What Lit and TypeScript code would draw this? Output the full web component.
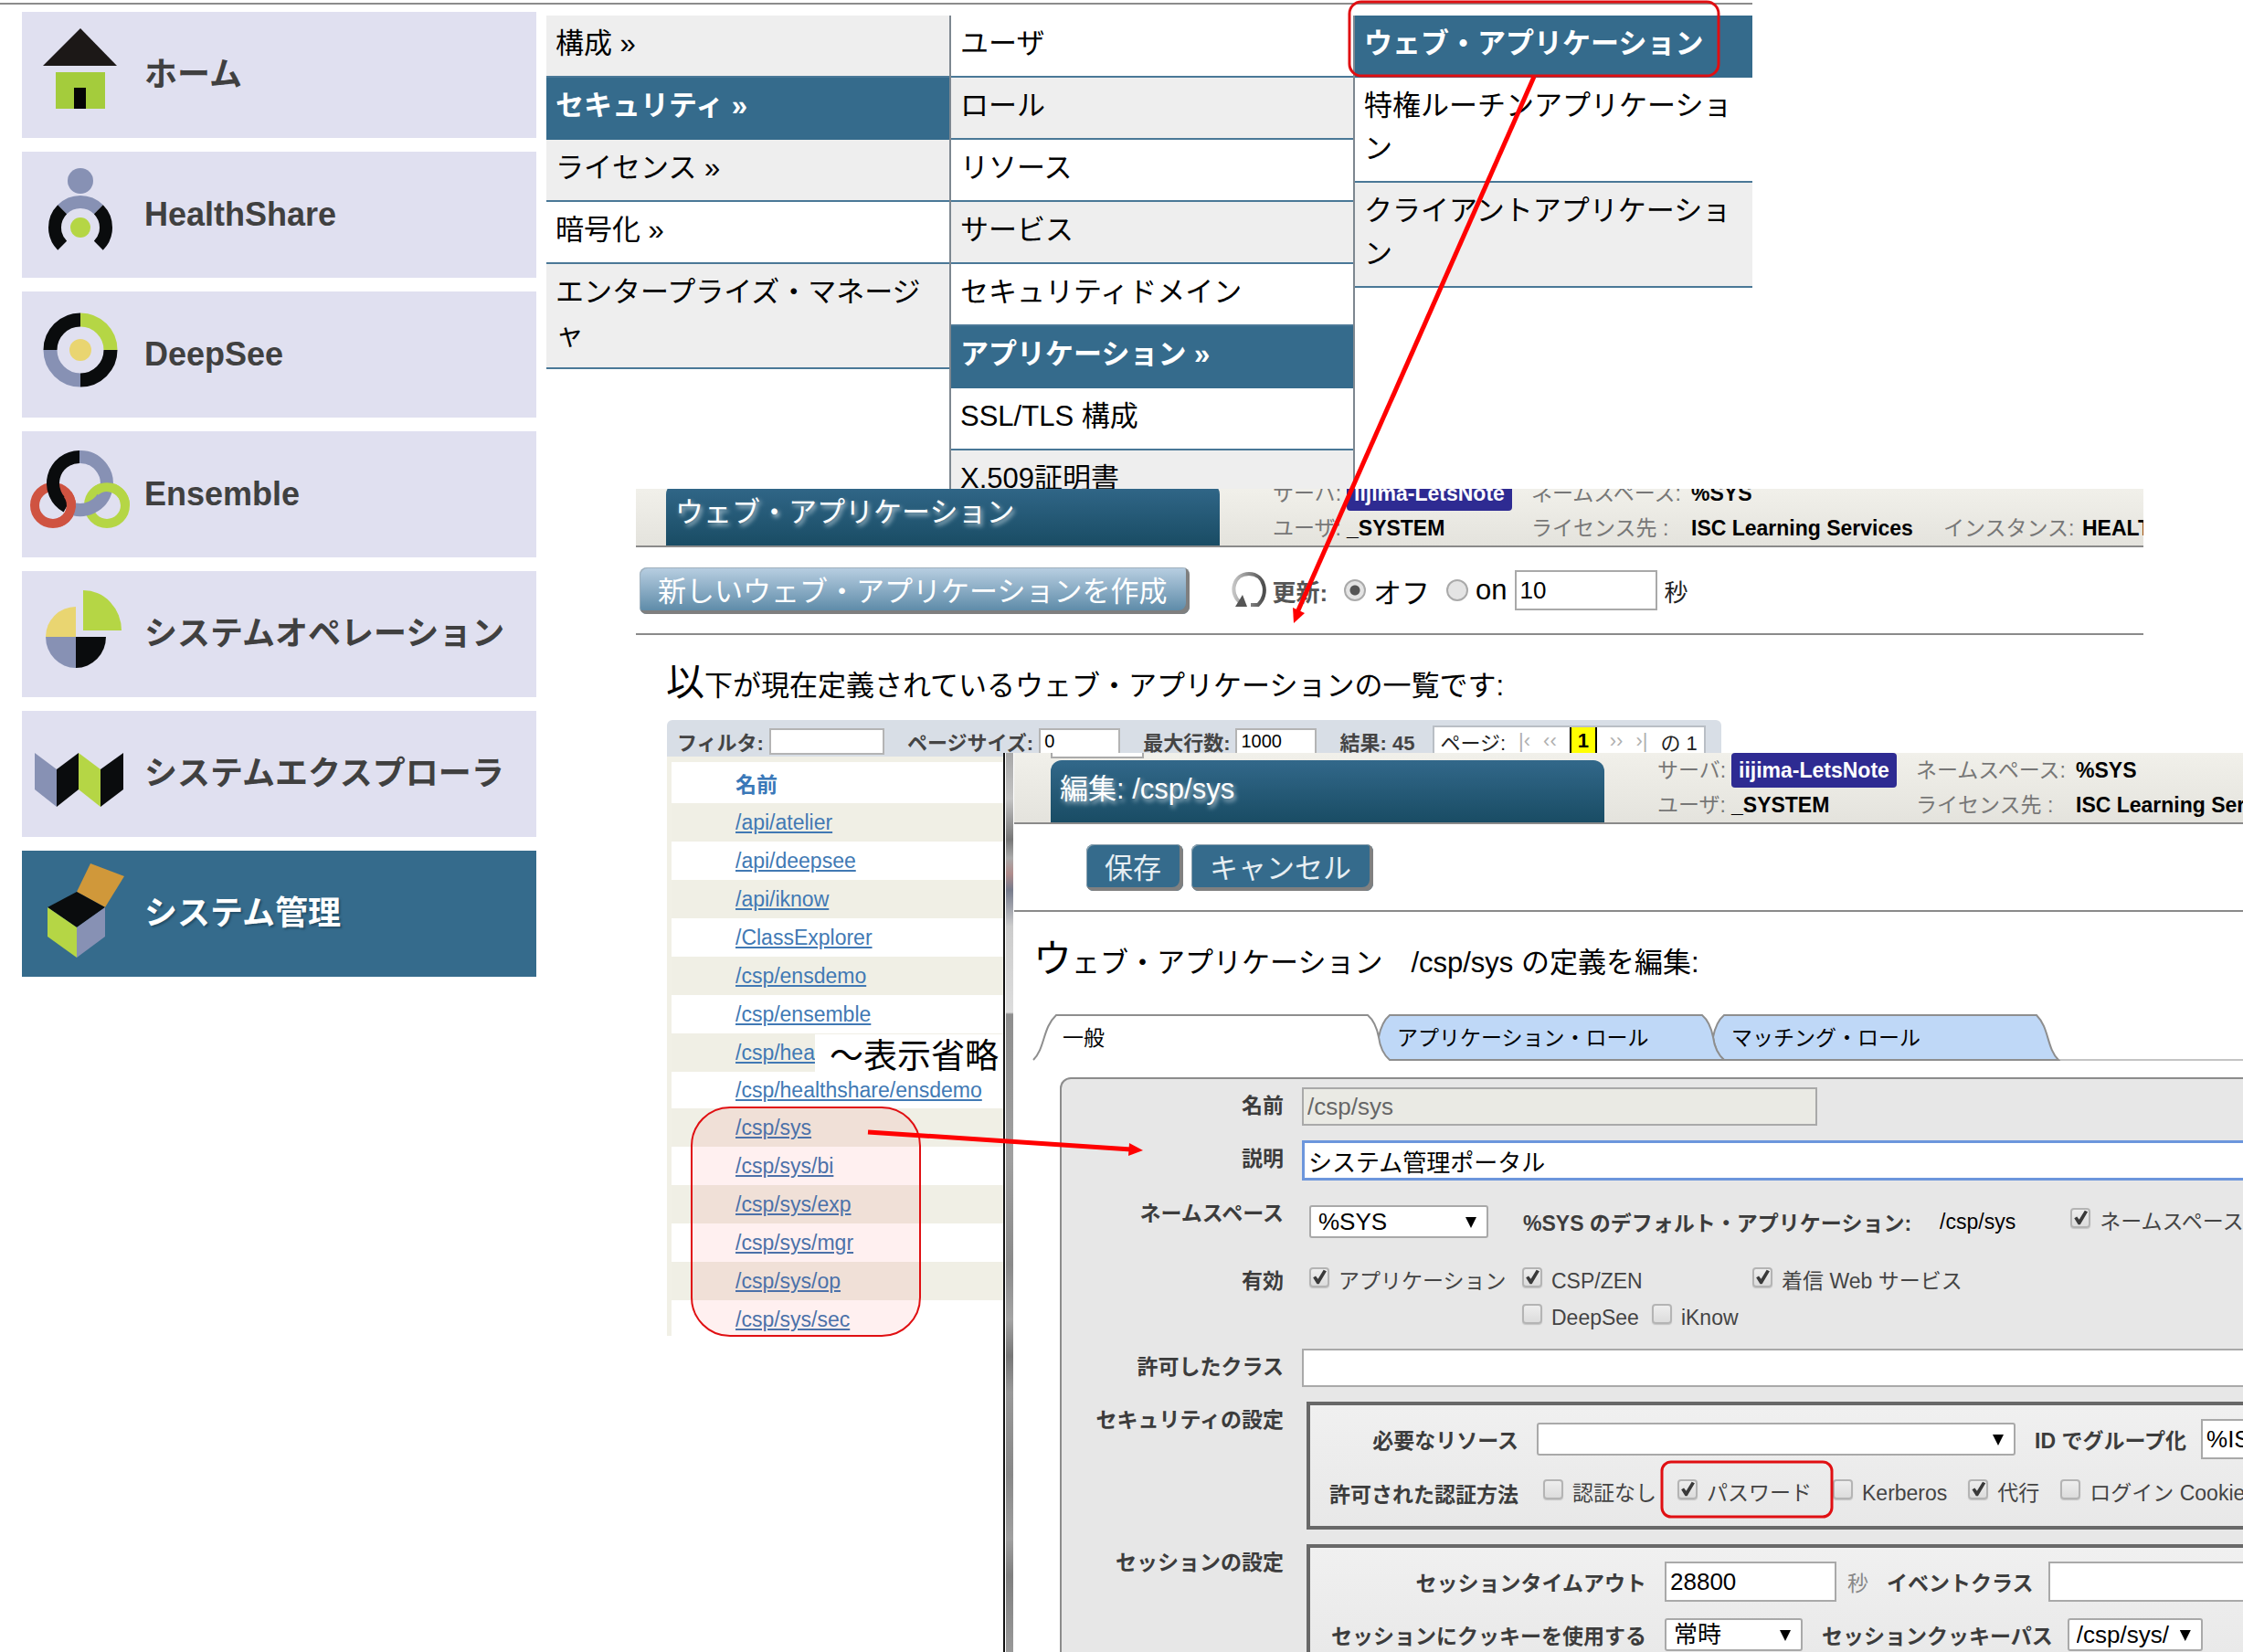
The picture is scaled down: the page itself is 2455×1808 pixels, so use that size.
import { LitElement, html, svg, css, nothing } from "lit";
import type { TemplateResult, SVGTemplateResult } from "lit";
import { customElement, property } from "lit/decorators.js";
import { classMap } from "lit/directives/class-map.js";

const base = css`
  :host {
    display: block;
    box-sizing: border-box;
    font-family: "Liberation Sans", "Noto Sans CJK JP", sans-serif;
    color: #000;
    white-space: nowrap;
  }
  *,
  *::before,
  *::after {
    box-sizing: border-box;
  }
  button,
  input,
  select {
    font-family: inherit;
    margin: 0;
  }
  h1,
  h2,
  p,
  ul {
    margin: 0;
    padding: 0;
    font-weight: normal;
  }
`;

const controls = css`
  .field {
    height: 42px;
    border: 2px solid #a9a9a9;
    border-radius: 0;
    background: #fff;
    padding: 0 4px;
    font-size: 26px;
    color: #000;
    outline: none;
  }
  .pick {
    position: relative;
    display: inline-flex;
  }
  .pick select {
    appearance: none;
    width: 100%;
    height: 36px;
    border: 2px solid #a9a9a9;
    border-radius: 3px;
    background: #fff;
    padding: 0 8px;
    font-size: 26px;
    color: #000;
  }
  .pick::after {
    content: "";
    position: absolute;
    right: 13px;
    top: 13px;
    width: 12px;
    height: 12px;
    background: #000;
    clip-path: polygon(0 0, 100% 0, 50% 100%);
    pointer-events: none;
  }
  .tick {
    appearance: none;
    flex: none;
    width: 22px;
    height: 22px;
    border: 2px solid #b4b4b4;
    border-radius: 4px;
    background: linear-gradient(#eee, #dcdcdc);
    box-shadow: 0 1px 1px #c4c4c4;
  }
  .tick:checked::before {
    content: "";
    display: block;
    width: 18px;
    height: 18px;
    background: #3a3a3a;
    clip-path: polygon(12% 52%, 28% 42%, 42% 60%, 76% 4%, 94% 12%, 48% 90%, 36% 90%);
  }
`;

/* ---------- portal: side navigation and cascading menu ---------- */

const BLACK = "#0a0c0d";
const SLATE = "#8791b4";
const LIME = "#b5d645";
const SAND = "#e9d571";

const icons: Record<string, SVGTemplateResult> = {
  home: svg`
    <path d="M64 18 104 59H23Z" fill="#1c1817"/>
    <path d="M37 66H91V106H37Z" fill="#a4cc3c"/>
    <path d="M57 83H70V106H57Z" fill="#050505"/>`,
  health: svg`
    <circle cx="64" cy="32" r="14" fill=${SLATE}/>
    <g fill="none" stroke-width="14">
      <path d="M44.200 63.200A28 28 0 0 1 83.800 63.200" stroke=${SLATE}/>
      <path d="M44.200 63.200A28 28 0 0 0 44.200 102.800" stroke=${BLACK}/>
      <path d="M83.800 63.200A28 28 0 0 1 83.800 102.800" stroke=${BLACK}/>
    </g>
    <circle cx="64" cy="83" r="11" fill=${LIME}/>`,
  deepsee: svg`
    <g fill="none" stroke-width="15">
      <path d="M31 64A33 33 0 0 1 64 31" stroke=${BLACK}/>
      <path d="M64 31A33 33 0 0 1 97 64" stroke=${LIME}/>
      <path d="M97 64A33 33 0 0 1 64 97" stroke=${BLACK}/>
      <path d="M64 97A33 33 0 0 1 31 64" stroke=${SLATE}/>
    </g>
    <circle cx="64" cy="64" r="12" fill=${SAND}/>`,
  ensemble: svg`
    <g fill="none">
      <circle cx="34" cy="81" r="20" stroke="#cf5341" stroke-width="10"/>
      <circle cx="93" cy="81" r="20" stroke=${LIME} stroke-width="10"/>
      <path d="M63 28A29 29 0 1 1 51 83" stroke=${SLATE} stroke-width="14"/>
      <path d="M63 28A29 29 0 0 0 49 82.400" stroke=${BLACK} stroke-width="14"/>
      <path d="M50 69A20 20 0 0 1 40 100" stroke="#cf5341" stroke-width="10"/>
      <path d="M80 66A20 20 0 0 1 113 81" stroke=${LIME} stroke-width="10"/>
    </g>`,
  operation: svg`
    <path d="M59 72V39A33 33 0 0 0 26 72Z" fill=${SAND}/>
    <path d="M59 72H26A33 34 0 0 0 59 106Z" fill=${SLATE}/>
    <path d="M59 72V106A33 34 0 0 0 92 72Z" fill=${BLACK}/>
    <path d="M67 65V21A42 44 0 0 1 109 65Z" fill=${LIME}/>`,
  explorer: svg`
    <path d="M14 46 38 64V105L14 86Z" fill=${SLATE}/>
    <path d="M38 64 62 46V86L38 105Z" fill=${BLACK}/>
    <path d="M62 46 86 64V105L62 86Z" fill=${LIME}/>
    <path d="M86 64 111 46V86L86 105Z" fill=${BLACK}/>`,
  admin: svg`
    <path d="M75 14 112 28 91 62 60 45Z" fill="#d0983a"/>
    <path d="M60 45 91 62 60 84 28 62Z" fill=${BLACK}/>
    <path d="M28 62 60 84V117L28 94Z" fill=${LIME}/>
    <path d="M60 84 91 62V94L60 117Z" fill=${SLATE}/>`,
};

interface NavItem {
  icon: string;
  text: string;
  active?: boolean;
}

const NAV: NavItem[] = [
  { icon: "home", text: "ホーム" },
  { icon: "health", text: "HealthShare" },
  { icon: "deepsee", text: "DeepSee" },
  { icon: "ensemble", text: "Ensemble" },
  { icon: "operation", text: "システムオペレーション" },
  { icon: "explorer", text: "システムエクスプローラ" },
  { icon: "admin", text: "システム管理", active: true },
];

interface MenuItem {
  text: string;
  tone: "grey" | "white" | "active";
}

const MENU: MenuItem[][] = [
  [
    { text: "構成 »", tone: "grey" },
    { text: "セキュリティ »", tone: "active" },
    { text: "ライセンス »", tone: "grey" },
    { text: "暗号化 »", tone: "white" },
    { text: "エンタープライズ・マネージャ", tone: "grey" },
  ],
  [
    { text: "ユーザ", tone: "white" },
    { text: "ロール", tone: "grey" },
    { text: "リソース", tone: "white" },
    { text: "サービス", tone: "grey" },
    { text: "セキュリティドメイン", tone: "white" },
    { text: "アプリケーション »", tone: "active" },
    { text: "SSL/TLS 構成", tone: "white" },
    { text: "X.509証明書", tone: "grey" },
  ],
  [
    { text: "ウェブ・アプリケーション", tone: "active" },
    { text: "特権ルーチンアプリケーション", tone: "white" },
    { text: "クライアントアプリケーション", tone: "grey" },
  ],
];

@customElement("portal-menu")
class PortalMenu extends LitElement {
  static styles = [
    base,
    css`
      :host {
        width: 1918px;
        padding-top: 3px;
      }
      .rule {
        height: 2px;
        background: #8c8c8c;
      }
      .body {
        display: flex;
        align-items: flex-start;
        gap: 11px;
        padding: 8px 0 0 24px;
      }
      .side {
        display: flex;
        flex-direction: column;
        gap: 15px;
        width: 563px;
      }
      .nav {
        display: flex;
        align-items: center;
        gap: 14px;
        height: 138px;
        border: 0;
        padding: 0;
        background: #e0e0f0;
        color: #404040;
        font-size: 36px;
        line-height: 40px;
        font-weight: bold;
        text-decoration: none;
      }
      .nav.active {
        background: #356b8c;
        color: #fff;
        text-shadow: 2px 2px 2px #24506b;
      }
      .nav svg {
        width: 120px;
        height: 138px;
        flex: none;
      }
      .menus {
        display: grid;
        grid-template-columns: 441fr 442fr 437fr;
        flex: 1;
        padding-top: 4px;
      }
      .col {
        list-style: none;
        border-left: 2px solid #7d8790;
      }
      .col:first-child {
        border-left: 0;
      }
      .item {
        display: block;
        border-bottom: 2px solid #4a7897;
        padding: 7px 8px 12px 10px;
        font-size: 31px;
        line-height: 47px;
        color: #000;
        text-decoration: none;
        white-space: normal;
        word-break: break-all;
        line-break: anywhere;
      }
      .item.grey {
        background: #eee;
      }
      .item.active {
        background: #356b8c;
        border-color: #356b8c;
        color: #fff;
        font-weight: bold;
      }
    `,
  ];

  render() {
    return html`
      <div class="rule"></div>
      <div class="body">
        <nav class="side">
          ${NAV.map(
            (n) => html`<a href="#" class=${classMap({ nav: true, active: !!n.active })}>
              <svg viewBox="0 0 120 138" aria-hidden="true">${icons[n.icon]}</svg>
              <span>${n.text}</span>
            </a>`
          )}
        </nav>
        <div class="menus">
          ${MENU.map(
            (col) => html`<ul class="col">
              ${col.map((m) => html`<li><a href="#" class="item ${m.tone}">${m.text}</a></li>`)}
            </ul>`
          )}
        </div>
      </div>
    `;
  }
}

/* ---------- title bar shared by the two windows ---------- */

@customElement("title-bar")
class TitleBar extends LitElement {
  @property() heading = "";

  static styles = [
    base,
    css`
      .bar {
        display: flex;
        align-items: flex-end;
        gap: 58px;
        height: 76px;
      }
      .title {
        flex: none;
        width: 606px;
        height: 68px;
        padding-left: 10px;
        border-radius: 12px 12px 0 0;
        background: linear-gradient(#32688a, #194c64);
        color: #fff;
        font-size: 31px;
        line-height: 64px;
        text-shadow: 2px 3px 5px #b9cdd8;
      }
      .info {
        display: grid;
        grid-template-columns: 81px 202px 175px 276px 152px 200px;
        grid-auto-rows: 38px;
        font-size: 23px;
        line-height: 38px;
        color: #777;
      }
      .value {
        color: #000;
        font-weight: bold;
      }
      .chip {
        justify-self: start;
        padding: 0 8px;
        border-radius: 4px;
        background: #2e2b92;
        color: #fff;
        font-weight: bold;
      }
    `,
  ];

  render() {
    return html`<div class="bar">
      <h1 class="title">${this.heading}</h1>
      <div class="info">
        <span>サーバ:</span><span class="chip">iijima-LetsNote</span>
        <span>ネームスペース:</span><span class="value">%SYS</span>
        <span></span><span></span>
        <span>ユーザ:</span><span class="value">_SYSTEM</span>
        <span>ライセンス先 :</span><span class="value">ISC Learning Services</span>
        <span>インスタンス:</span><span class="value">HEALTH</span>
      </div>
    </div>`;
  }
}

/* ---------- list of web applications ---------- */

const APPS = [
  "/api/atelier",
  "/api/deepsee",
  "/api/iknow",
  "/ClassExplorer",
  "/csp/ensdemo",
  "/csp/ensemble",
  "/csp/hea",
  "/csp/healthshare/ensdemo",
  "/csp/sys",
  "/csp/sys/bi",
  "/csp/sys/exp",
  "/csp/sys/mgr",
  "/csp/sys/op",
  "/csp/sys/sec",
];

@customElement("app-list")
class AppList extends LitElement {
  static styles = [
    base,
    controls,
    css`
      :host {
        background: #fff;
        overflow: hidden;
      }
      .top {
        display: flex;
        align-items: flex-end;
        height: 64px;
        padding-left: 33px;
        background: linear-gradient(#f1f0ea, #e4e3dd);
        border-bottom: 2px solid #8a8a8a;
      }
      .actions {
        display: flex;
        align-items: center;
        height: 96px;
        padding: 0 0 0 4px;
        border-bottom: 2px solid #8a8a8a;
      }
      .create {
        height: 51px;
        margin-right: 44px;
        padding: 0 25px 4px 20px;
        border: 0;
        border-radius: 8px;
        background: linear-gradient(#b9cfe2, #5786a4);
        box-shadow: inset -4px -4px 0 #7f7f7f, inset 1px 1px 0 #9fb0bd;
        color: #fff;
        font-size: 31px;
      }
      .reload {
        width: 40px;
        height: 42px;
        margin-right: 6px;
      }
      .caption {
        margin-right: 18px;
        font-size: 26px;
        font-weight: bold;
        color: #555;
      }
      .radio {
        appearance: none;
        width: 24px;
        height: 24px;
        margin-right: 8px;
        border: 2px solid #aaa;
        border-radius: 50%;
        background: #e4e4e4;
      }
      .radio:checked {
        background: radial-gradient(circle, #555 0 5px, #e4e4e4 6px);
      }
      .choice {
        display: flex;
        align-items: center;
        margin-right: 18px;
        font-size: 31px;
      }
      .choice.last {
        margin-right: 8px;
      }
      .seconds {
        width: 156px;
        height: 44px;
        margin-right: 8px;
      }
      .unit {
        font-size: 26px;
        color: #222;
      }
      .lead {
        padding: 22px 0 0 33px;
        height: 93px;
        font-size: 31px;
        line-height: 60px;
      }
      .lead::first-letter {
        font-size: 42px;
      }
      .filter {
        display: flex;
        align-items: center;
        width: 1154px;
        height: 40px;
        margin-left: 34px;
        padding: 6px 0 0 11px;
        border-radius: 6px 6px 0 0;
        background: #d8dee6;
        font-size: 22px;
        font-weight: bold;
        color: #444;
      }
      .group {
        display: flex;
        align-items: center;
        gap: 6px;
        margin-right: 25px;
      }
      .small {
        width: 89px;
        height: 29px;
        border: 2px solid #b4b4b4;
        padding: 0 4px;
        font-size: 20px;
        outline: none;
      }
      .small.search {
        width: 126px;
      }
      .count {
        margin-right: 20px;
      }
      .pager {
        display: flex;
        align-items: center;
        gap: 14px;
        height: 34px;
        width: 299px;
        padding-left: 6px;
        border: 2px solid #b9bec5;
        background: #fff;
        font-weight: normal;
        color: #222;
      }
      .step {
        border: 0;
        padding: 0;
        background: none;
        color: #b0b0b0;
        font-size: 22px;
      }
      .page {
        width: 30px;
        height: 30px;
        border: 2px solid #000;
        border-width: 0 2px;
        background: #ff0;
        color: #000;
        font-weight: bold;
        text-align: center;
        line-height: 30px;
      }
      .table {
        width: 500px;
        margin-left: 34px;
        border-spacing: 0;
        border: 5px solid #f1f0e6;
        border-width: 6px 0 0 5px;
        font-size: 23px;
        text-align: left;
      }
      .table th {
        height: 45px;
        padding: 0 0 0 70px;
        color: #3a78b8;
      }
      .table td {
        height: 42px;
        padding: 0 0 0 70px;
      }
      .table .cut td {
        height: 40px;
      }
      .table tbody tr:nth-child(odd) {
        background: #f0efe5;
      }
      .table a {
        color: #4179b4;
      }
    `,
  ];

  render() {
    return html`
      <div class="top"><title-bar heading="ウェブ・アプリケーション"></title-bar></div>
      <div class="actions">
        <button class="create" type="button">新しいウェブ・アプリケーションを作成</button>
        <svg class="reload" viewBox="0 0 40 42" aria-hidden="true">
          <defs>
            <linearGradient id="steel" x1="0" x2="1"><stop offset="0" stop-color="#c4c4c4"/><stop offset="1" stop-color="#4c4c4c"/></linearGradient>
          </defs>
          <path d="M11 34C-1 24 4 3 21 3C39 3 43 26 31 37H23" fill="none" stroke="url(#steel)" stroke-width="4"/>
          <path d="M6 39 14 26 19 39Z" fill="#555"/>
        </svg>
        <span class="caption">更新:</span>
        <label class="choice"><input class="radio" type="radio" name="refresh" checked />オフ</label>
        <label class="choice last"><input class="radio" type="radio" name="refresh" />on</label>
        <input class="field seconds" aria-label="更新" .value=${"10"} />
        <span class="unit">秒</span>
      </div>
      <h2 class="lead">以下が現在定義されているウェブ・アプリケーションの一覧です:</h2>
      <div class="filter">
        <label class="group">フィルタ:<input class="small search" /></label>
        <label class="group">ページサイズ:<input class="small" .value=${"0"} /></label>
        <label class="group">最大行数:<input class="small" .value=${"1000"} /></label>
        <span class="count">結果: 45</span>
        <div class="pager">
          <span>ページ:</span>
          <button class="step" type="button">|‹</button>
          <button class="step" type="button">‹‹</button>
          <span class="page">1</span>
          <button class="step" type="button">››</button>
          <button class="step" type="button">›|</button>
          <span>の 1</span>
        </div>
      </div>
      <table class="table">
        <thead>
          <tr><th>名前</th></tr>
        </thead>
        <tbody>
          ${APPS.map(
            (a, i) => html`<tr class=${i === 7 ? "cut" : nothing}><td><a href="#">${a}</a></td></tr>`
          )}
        </tbody>
      </table>
    `;
  }
}

/* ---------- edit form of one web application ---------- */

const tick = (text: string, checked = false): TemplateResult => html`<label class="check"
  ><input class="tick" type="checkbox" .checked=${checked} />${text}</label
>`;

@customElement("app-editor")
class AppEditor extends LitElement {
  static styles = [
    base,
    controls,
    css`
      :host {
        display: flex;
        overflow: hidden;
        background: #fff;
      }
      .frame {
        flex: none;
        width: 12px;
        border-left: 2px solid #111;
        background: linear-gradient(
          #a8a8a8 0,
          #c4c4c4 50px,
          #777 95px,
          #aaa 115px,
          #b08c8c 132px,
          #777c8c 150px,
          #ccc 190px,
          #ddd 284px,
          #8e8e8e 286px,
          #a0a0a0 440px,
          #8a8a8a 560px,
          #a4a4a4 620px,
          #777 660px,
          #999 700px,
          #888 790px,
          #a0a0a0 860px,
          #808080 900px,
          #999 100%
        );
        box-shadow: inset 1px 0 0 #fff, inset -1px 0 0 #fff;
      }
      .page {
        flex: 1;
        min-width: 0;
      }
      .top {
        position: relative;
        height: 78px;
        padding-left: 40px;
        background: linear-gradient(#f1f0ea, #e4e3dd);
        border-bottom: 2px solid #8a8a8a;
      }
      .stub {
        position: absolute;
        left: 40px;
        top: 0;
        width: 102px;
        height: 6px;
        border: 2px solid #aaa;
        border-top: 0;
        background: #fff;
      }
      .actions {
        display: flex;
        align-items: center;
        gap: 9px;
        height: 96px;
        padding-left: 79px;
        border-bottom: 2px solid #8a8a8a;
      }
      .push {
        height: 51px;
        padding: 0 24px 4px 20px;
        border: 0;
        border-radius: 8px;
        background: #356b8c;
        box-shadow: inset -4px -4px 0 #808080, inset 1px 1px 0 #8aa0ae;
        color: #e6eef2;
        font-size: 31px;
      }
      .lead {
        height: 111px;
        padding: 22px 0 0 21px;
        font-size: 31px;
        line-height: 60px;
      }
      .lead::first-letter {
        font-size: 42px;
      }
      .tabs {
        position: relative;
        display: flex;
        height: 52px;
        padding-left: 33px;
      }
      .shape {
        position: absolute;
        left: 0;
        top: 0;
        width: 100%;
        height: 52px;
      }
      .tab {
        position: relative;
        width: 366px;
        padding: 0 0 2px 20px;
        border: 0;
        background: none;
        color: #000;
        font-size: 23px;
        text-align: left;
      }
      .panel {
        display: grid;
        grid-template-columns: 243px 1fr;
        column-gap: 20px;
        row-gap: 16px;
        margin: 18px -40px 0 50px;
        padding-top: 9px;
        border: 2px solid #8c8c8c;
        border-bottom: 0;
        border-radius: 12px 0 0 0;
        background: #e7e7e7;
        color: #444;
        font-size: 23px;
      }
      .name {
        text-align: right;
        font-weight: bold;
        line-height: 40px;
        color: #3c3c3c;
      }
      .strong {
        font-weight: bold;
        color: #3c3c3c;
      }
      .full {
        width: 100%;
      }
      .readonly {
        width: 564px;
        background: #eaeae4;
        color: #666;
      }
      .focused {
        height: 44px;
        border: 3px solid #6c96dc;
      }
      .line {
        display: flex;
        align-items: center;
        padding-left: 8px;
      }
      .line.space {
        height: 58px;
      }
      .w-space {
        width: 196px;
        margin-right: 38px;
      }
      .path {
        margin: 0 60px 0 31px;
        color: #000;
      }
      .check {
        display: flex;
        align-items: center;
        gap: 10px;
        line-height: 40px;
      }
      .check .tick {
        margin-bottom: 8px;
      }
      .enabled {
        display: grid;
        grid-template-columns: 233px 252px auto;
        height: 78px;
        padding-left: 8px;
      }
      .pair {
        grid-column: 2 / 4;
        display: flex;
        gap: 14px;
      }
      .group {
        display: grid;
        align-content: start;
        row-gap: 8px;
        height: 140px;
        margin: 0 0 0 5px;
        padding: 14px 0 0;
        border: 4px solid #686868;
        background: linear-gradient(#f0f0f0, #e8e8e8);
      }
      .row {
        display: flex;
        align-items: center;
        height: 46px;
      }
      .row.loose {
        height: 56px;
      }
      .row .key {
        flex: none;
        width: 228px;
        margin-right: 20px;
        text-align: right;
        font-weight: bold;
        color: #3c3c3c;
      }
      .session .key {
        width: 368px;
      }
      .session {
        row-gap: 12px;
      }
      .w-resource {
        width: 524px;
        margin-right: 21px;
      }
      .w-group {
        width: 200px;
        height: 44px;
        margin-left: 16px;
      }
      .methods {
        display: flex;
        gap: 23px;
        padding-left: 7px;
      }
      .w-timeout {
        width: 188px;
        height: 44px;
        margin-right: 12px;
      }
      .unit {
        margin-right: 20px;
        color: #888;
      }
      .w-event {
        width: 300px;
        height: 44px;
        margin-left: 16px;
      }
      .w-cookie {
        width: 151px;
        margin-right: 21px;
      }
      .w-path {
        width: 148px;
        margin-left: 16px;
      }
    `,
  ];

  render() {
    return html`
      <div class="frame"></div>
      <div class="page">
        <div class="top">
          <span class="stub"></span>
          <title-bar heading="編集: /csp/sys"></title-bar>
        </div>
        <div class="actions">
          <button class="push" type="button">保存</button>
          <button class="push" type="button">キャンセル</button>
        </div>
        <h2 class="lead">ウェブ・アプリケーション　/csp/sys の定義を編集:</h2>
        <div class="tabs" role="tablist">
          <svg class="shape" aria-hidden="true">
            <g stroke="#8e8e8e" stroke-width="2">
              <path d="M1143 51H3000" stroke="#c4c4c4"/>
              <path d="M777 51C769 44 766 34 765 26C767 16 771 7 777 2H1119C1133 16 1130 38 1143 51Z" fill="#bfd8f7"/>
              <path d="M411 51C403 44 400 34 399 26C401 16 405 7 411 2H753C759 7 763 16 765 26C766 34 769 44 777 51Z" fill="#bfd8f7"/>
              <path d="M21 51C34 38 31 16 46 2H387C393 7 397 16 399 26" fill="none"/>
            </g>
          </svg>
          <button class="tab" role="tab" type="button" aria-selected="true">一般</button>
          <button class="tab" role="tab" type="button">アプリケーション・ロール</button>
          <button class="tab" role="tab" type="button">マッチング・ロール</button>
        </div>
        <form class="panel">
          <label class="name" for="name">名前</label>
          <input id="name" class="field readonly" readonly .value=${"/csp/sys"} />

          <label class="name" for="desc">説明</label>
          <input id="desc" class="field full focused" .value=${"システム管理ポータル"} />

          <label class="name" for="ns">ネームスペース</label>
          <div class="line space">
            <span class="pick w-space"><select id="ns"><option>%SYS</option></select></span>
            <span class="strong">%SYS のデフォルト・アプリケーション:</span>
            <span class="path">/csp/sys</span>
            ${tick("ネームスペース", true)}
          </div>

          <span class="name">有効</span>
          <div class="enabled">
            ${tick("アプリケーション", true)} ${tick("CSP/ZEN", true)}
            ${tick("着信 Web サービス", true)}
            <div class="pair">${tick("DeepSee")} ${tick("iKnow")}</div>
          </div>

          <label class="name" for="classes">許可したクラス</label>
          <input id="classes" class="field full" />

          <span class="name">セキュリティの設定</span>
          <div class="group">
            <div class="row">
              <label class="key" for="res">必要なリソース</label>
              <span class="pick w-resource"><select id="res"><option></option></select></span>
              <label class="strong" for="gid">ID でグループ化</label>
              <input id="gid" class="field w-group" .value=${"%ISC"} />
            </div>
            <div class="row loose">
              <span class="key">許可された認証方法</span>
              <div class="methods">
                ${tick("認証なし")} ${tick("パスワード", true)} ${tick("Kerberos")}
                ${tick("代行", true)} ${tick("ログイン Cookie")}
              </div>
            </div>
          </div>

          <span class="name">セッションの設定</span>
          <div class="group session">
            <div class="row">
              <label class="key" for="timeout">セッションタイムアウト</label>
              <input id="timeout" class="field w-timeout" .value=${"28800"} />
              <span class="unit">秒</span>
              <label class="strong" for="event">イベントクラス</label>
              <input id="event" class="field w-event" />
            </div>
            <div class="row">
              <label class="key" for="cookie">セッションにクッキーを使用する</label>
              <span class="pick w-cookie"><select id="cookie"><option>常時</option></select></span>
              <label class="strong" for="cpath">セッションクッキーパス</label>
              <span class="pick w-path"><select id="cpath"><option>/csp/sys/</option></select></span>
            </div>
          </div>
        </form>
      </div>
    `;
  }
}

/* ---------- canvas with the overlapping windows and the callouts ---------- */

@customElement("app-root")
class AppRoot extends LitElement {
  static styles = [
    base,
    css`
      :host {
        position: relative;
        height: 100vh;
        overflow: hidden;
        background: #fff;
      }
      .list {
        position: absolute;
        left: 696px;
        top: 535px;
        width: 1650px;
        height: 927px;
      }
      .editor {
        position: absolute;
        left: 1098px;
        top: 824px;
        right: 0;
        bottom: 0;
      }
      .omitted {
        position: absolute;
        left: 892px;
        top: 1132px;
        width: 206px;
        height: 42px;
        padding-left: 16px;
        background: #fff;
        font-size: 37px;
        line-height: 50px;
      }
      .marks {
        position: absolute;
        inset: 0;
        width: 100%;
        height: 100%;
        pointer-events: none;
      }
    `,
  ];

  render() {
    return html`
      <portal-menu></portal-menu>
      <app-list class="list"></app-list>
      <p class="omitted">～表示省略</p>
      <app-editor class="editor"></app-editor>
      <svg class="marks" aria-hidden="true">
        <g fill="none" stroke="#e00f12">
          <rect x="1477" y="2" width="404" height="81" rx="13" stroke-width="3"/>
          <rect x="1819" y="1600" width="186" height="60" rx="10" stroke-width="3"/>
          <rect x="757" y="1212" width="250" height="250" rx="42" stroke-width="2" fill="rgba(255,0,0,0.06)"/>
        </g>
        <g stroke="#f00" stroke-width="5" fill="#f00">
          <path d="M1679 84 1420 670"/>
          <path d="M950 1239 1238 1258"/>
          <path d="M1416 682 1415 665 1428 671Z" stroke="none"/>
          <path d="M1251 1259 1235 1265 1236 1251Z" stroke="none"/>
        </g>
      </svg>
    `;
  }
}
